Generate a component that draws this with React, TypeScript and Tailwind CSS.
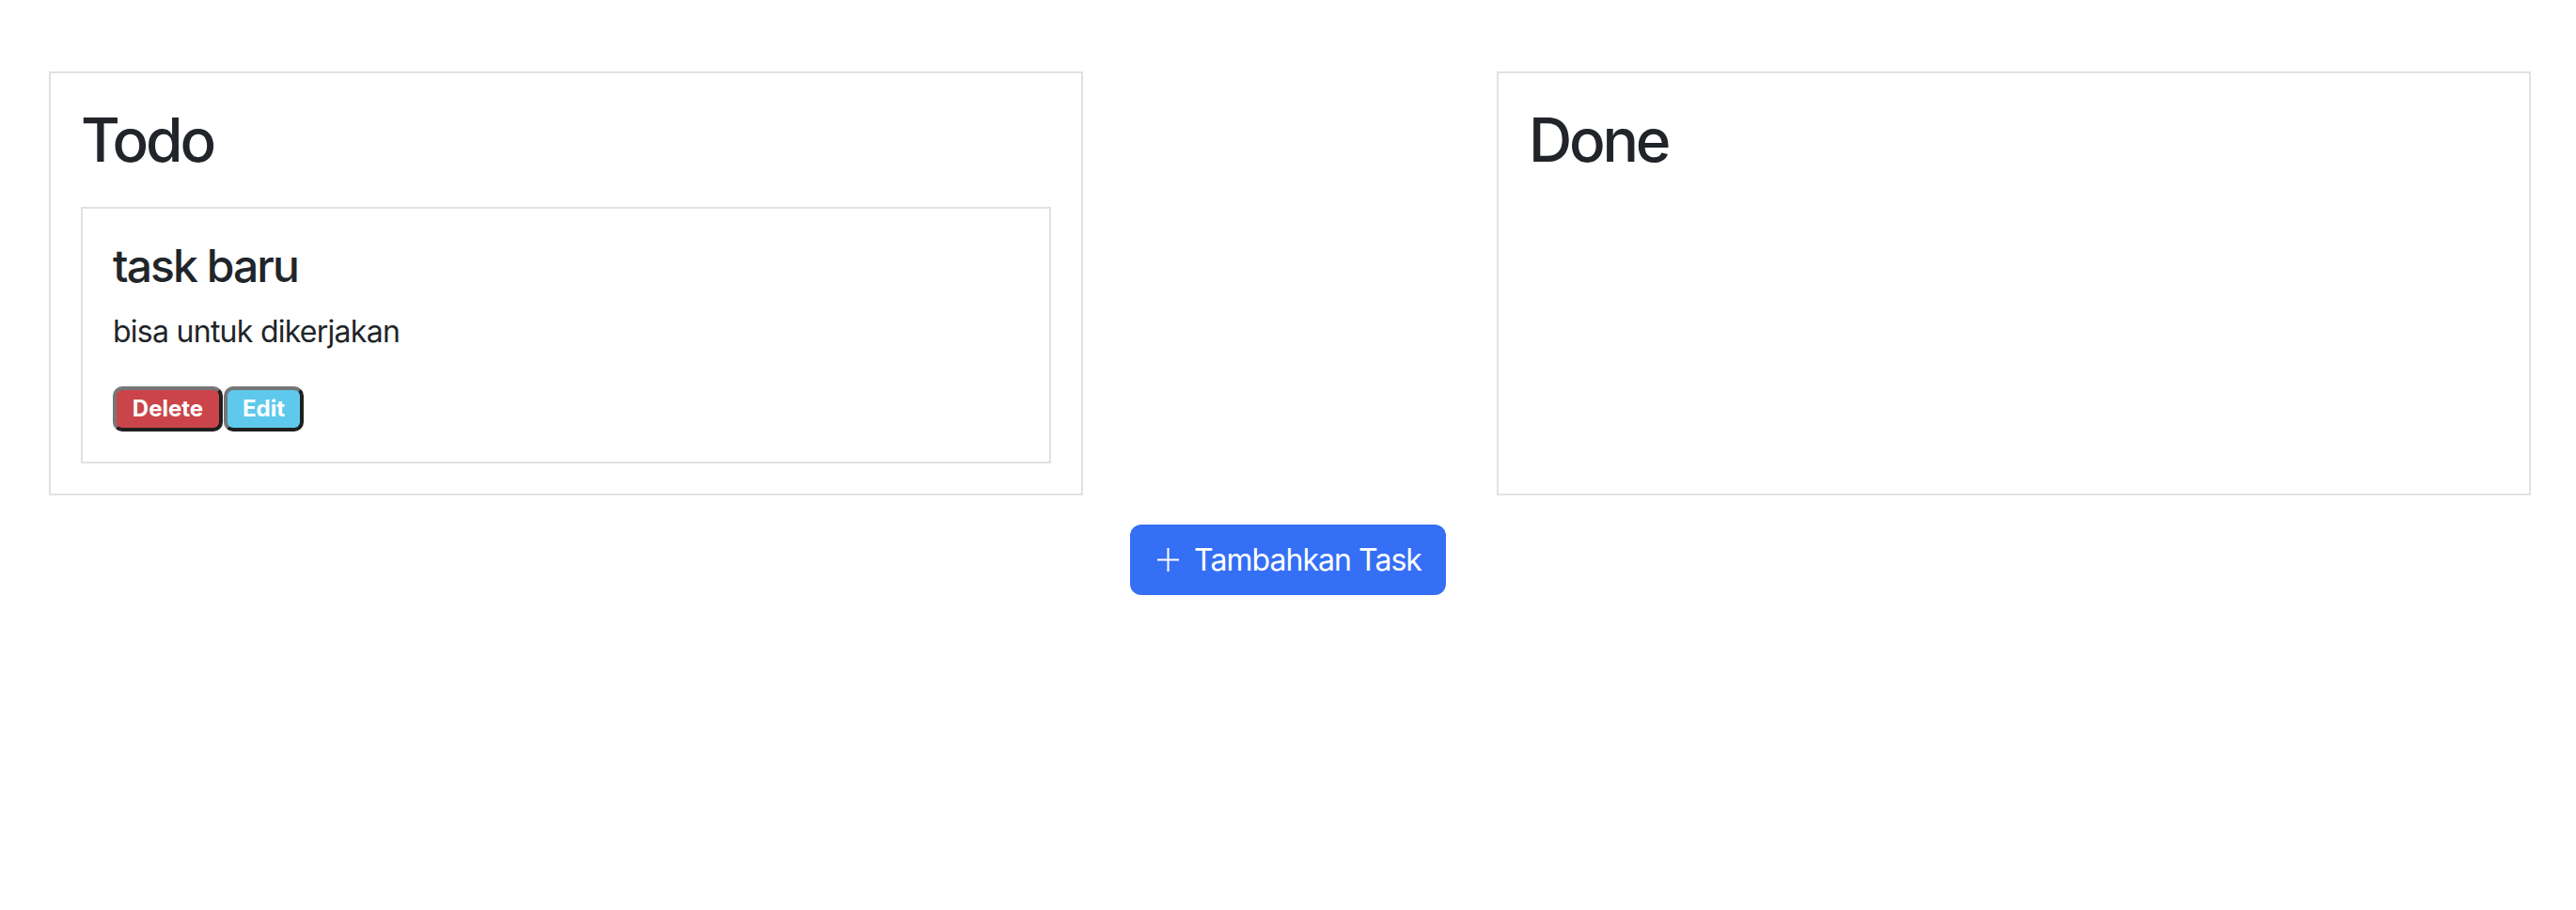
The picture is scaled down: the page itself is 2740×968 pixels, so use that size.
import React, { useState } from 'react';

interface Task {
  id: number;
  title: string;
  description: string;
  done: boolean;
}

function TaskCard({ task, onDelete }: { task: Task; onDelete: (id: number) => void }) {
  return (
    <div className="border-2 border-[#dee2e6] p-8">
      <h4 className="text-[48px] leading-[58px] font-medium tracking-[-0.04em] mb-[17px] text-[#212529]">{task.title}</h4>
      <p className="text-[32px] leading-[48px] tracking-[-0.023em] mb-[34px] text-[#212529]">{task.description}</p>
      <div className="flex gap-px">
        <button
          type="button"
          onClick={() => onDelete(task.id)}
          className="w-[117px] h-[48px] flex items-center justify-center rounded-[10px] border-4 border-t-[#767676] border-l-[#767676] border-b-[#1f1f1f] border-r-[#1f1f1f] bg-[#cb444a] text-white font-bold text-[24px]"
        >
          Delete
        </button>
        <button
          type="button"
          className="w-[85px] h-[48px] flex items-center justify-center rounded-[10px] border-4 border-t-[#767676] border-l-[#767676] border-b-[#1f1f1f] border-r-[#1f1f1f] bg-[#5ec9ec] text-white font-bold text-[24px]"
        >
          Edit
        </button>
      </div>
    </div>
  );
}

function Column({ title, tasks, onDelete }: { title: string; tasks: Task[]; onDelete: (id: number) => void }) {
  return (
    <div className="w-[1100px] border-2 border-[#dee2e6] p-8">
      <h2 className="text-[64px] leading-[77px] font-medium tracking-[-0.05em] mb-[33px] text-[#212529]">{title}</h2>
      <div className="flex flex-col gap-4">
        {tasks.map((task) => (
          <TaskCard key={task.id} task={task} onDelete={onDelete} />
        ))}
      </div>
    </div>
  );
}

export default function App() {
  const [tasks, setTasks] = useState<Task[]>([
    { id: 1, title: 'task baru', description: 'bisa untuk dikerjakan', done: false },
  ]);

  const handleDelete = (id: number) => {
    setTasks(tasks.filter((t) => t.id !== id));
  };

  return (
    <div className="min-h-screen bg-white pt-[76px] font-['Inter','Liberation_Sans',sans-serif]">
      <div className="flex justify-between pl-[52px] pr-[48px]">
        <Column title="Todo" tasks={tasks.filter((t) => !t.done)} onDelete={handleDelete} />
        <Column title="Done" tasks={tasks.filter((t) => t.done)} onDelete={handleDelete} />
      </div>
      <div className="flex justify-center mt-[31px]">
        <button
          type="button"
          className="h-[75px] flex items-center pl-[29px] pr-[26px] rounded-[12px] bg-[#356ff5] text-white text-[32px] leading-[48px] tracking-[-0.03em]"
        >
          <svg width="23" height="25" viewBox="0 0 23 25" className="mr-[16px]" fill="none" stroke="currentColor" strokeWidth="2">
            <path d="M11.5 0v25M0 12.5h23" />
          </svg>
          Tambahkan Task
        </button>
      </div>
    </div>
  );
}
